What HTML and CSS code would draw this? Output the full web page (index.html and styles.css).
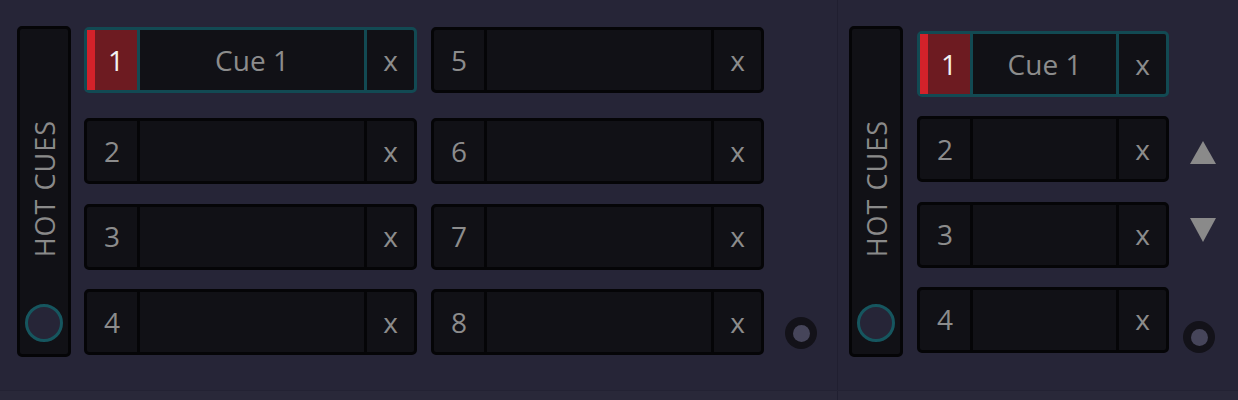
FILE: index.html
```html
<!DOCTYPE html>
<html>
<head>
<meta charset="utf-8">
<link rel="stylesheet" href="styles.css">
</head>
<body>
<div class="app">
  <section class="deck deck-left">
    <div class="sidebar">
      <div class="side-label">HOT CUES</div>
      <div class="ring"></div>
    </div>
    <div class="cue-col">
      <div class="cue selected first"><div class="num">1</div><div class="name">Cue 1</div><div class="del">x</div></div>
      <div class="cue"><div class="num">2</div><div class="name"></div><div class="del">x</div></div>
      <div class="cue"><div class="num">3</div><div class="name"></div><div class="del">x</div></div>
      <div class="cue"><div class="num">4</div><div class="name"></div><div class="del">x</div></div>
    </div>
    <div class="cue-col">
      <div class="cue first"><div class="num">5</div><div class="name"></div><div class="del">x</div></div>
      <div class="cue"><div class="num">6</div><div class="name"></div><div class="del">x</div></div>
      <div class="cue"><div class="num">7</div><div class="name"></div><div class="del">x</div></div>
      <div class="cue"><div class="num">8</div><div class="name"></div><div class="del">x</div></div>
    </div>
    <div class="knob-col">
      <div class="knob"><div class="knob-dot"></div></div>
    </div>
  </section>
  <div class="sep"></div>
  <section class="deck deck-right">
    <div class="sidebar">
      <div class="side-label">HOT CUES</div>
      <div class="ring"></div>
    </div>
    <div class="cue-col narrow">
      <div class="cue selected"><div class="num">1</div><div class="name">Cue 1</div><div class="del">x</div></div>
      <div class="cue"><div class="num">2</div><div class="name"></div><div class="del">x</div></div>
      <div class="cue"><div class="num">3</div><div class="name"></div><div class="del">x</div></div>
      <div class="cue"><div class="num">4</div><div class="name"></div><div class="del">x</div></div>
    </div>
    <div class="ctrl-col">
      <div class="tri tri-up"></div>
      <div class="tri tri-down"></div>
      <div class="knob"><div class="knob-dot"></div></div>
    </div>
  </section>
</div>
<div class="footer"><div class="footer-left"></div><div class="sep"></div><div class="footer-right"></div></div>
</body>
</html>
```
FILE: styles.css
```css
* { box-sizing: border-box; }
html, body {
  margin: 0;
  padding: 0;
  width: 1238px;
  height: 400px;
  overflow: hidden;
  background: #262537;
  font-family: "Open Sans", "DejaVu Sans", sans-serif;
}
.app {
  display: flex;
  height: 390px;
}
.deck {
  display: flex;
  align-items: flex-start;
}
.deck-left {
  width: 837px;
  padding: 26px 0 0 17px;
}
.deck-right {
  flex: 1;
  padding: 26px 0 0 11px;
}
.sep {
  width: 1px;
  background: #201f30;
}
.sidebar {
  width: 54px;
  height: 331px;
  background: #111116;
  border: 3px solid #050507;
  border-radius: 5px;
  display: flex;
  flex-direction: column;
  align-items: center;
}
.side-label {
  writing-mode: vertical-rl;
  transform: rotate(180deg);
  color: #8a8a8a;
  font-size: 27px;
  letter-spacing: 1px;
  line-height: 1;
  margin-top: 91px;
  margin-left: 1px;
}
.ring {
  margin-top: auto;
  margin-bottom: 12px;
  width: 38px;
  height: 38px;
  border-radius: 50%;
  border: 3px solid #16565f;
  background: #262537;
}
.cue-col {
  width: 333px;
  margin-left: 13px;
  display: flex;
  flex-direction: column;
  gap: 19.5px;
}
.cue-col + .cue-col { margin-left: 14px; }
.cue-col .first { margin-top: 1px; margin-bottom: 5.5px; }
.cue-col.narrow {
  width: 252px;
  margin-left: 14px;
  margin-top: 5px;
  gap: 19.33px;
}
.cue {
  height: 66px;
  display: flex;
  background: #111116;
  border: 3px solid #050507;
  border-radius: 5px;
  color: #8c8c8c;
  font-size: 28px;
}
.cue > div {
  display: flex;
  align-items: center;
  justify-content: center;
  padding-bottom: 1px;
}
.num {
  width: 53px;
  border-right: 3px solid #050507;
}
.name { flex: 1; }
.del {
  width: 50px;
  border-left: 3px solid #050507;
}
.cue.selected {
  border-color: #124a53;
}
.cue.selected .num {
  border-right-color: #124a53;
  border-left: 8px solid #d3222a;
  background: #6d1b21;
  color: #f2f2f2;
}
.cue.selected .del { border-left-color: #124a53; }
.knob-col {
  margin-left: 21px;
  padding-top: 291px;
}
.knob {
  width: 32px;
  height: 32px;
  border-radius: 50%;
  background: #131219;
  display: flex;
  align-items: center;
  justify-content: center;
}
.knob-dot {
  width: 17px;
  height: 17px;
  border-radius: 50%;
  background: #46455a;
}
.ctrl-col {
  margin-left: 14px;
  width: 34px;
  display: flex;
  flex-direction: column;
  align-items: flex-start;
  padding-top: 115px;
}
.tri {
  width: 0;
  height: 0;
  margin-left: 7px;
  border-left: 13.5px solid transparent;
  border-right: 13.5px solid transparent;
}
.tri-up { border-bottom: 23px solid #8a8a8a; }
.tri-down { border-top: 24px solid #8a8a8a; margin-top: 54px; }
.ctrl-col .knob { margin-top: 79px; }
.footer {
  height: 10px;
  display: flex;
  background: #292839;
  border-top: 1px solid #232233;
}
.footer-left { width: 837px; }
.footer-right { flex: 1; }
```
